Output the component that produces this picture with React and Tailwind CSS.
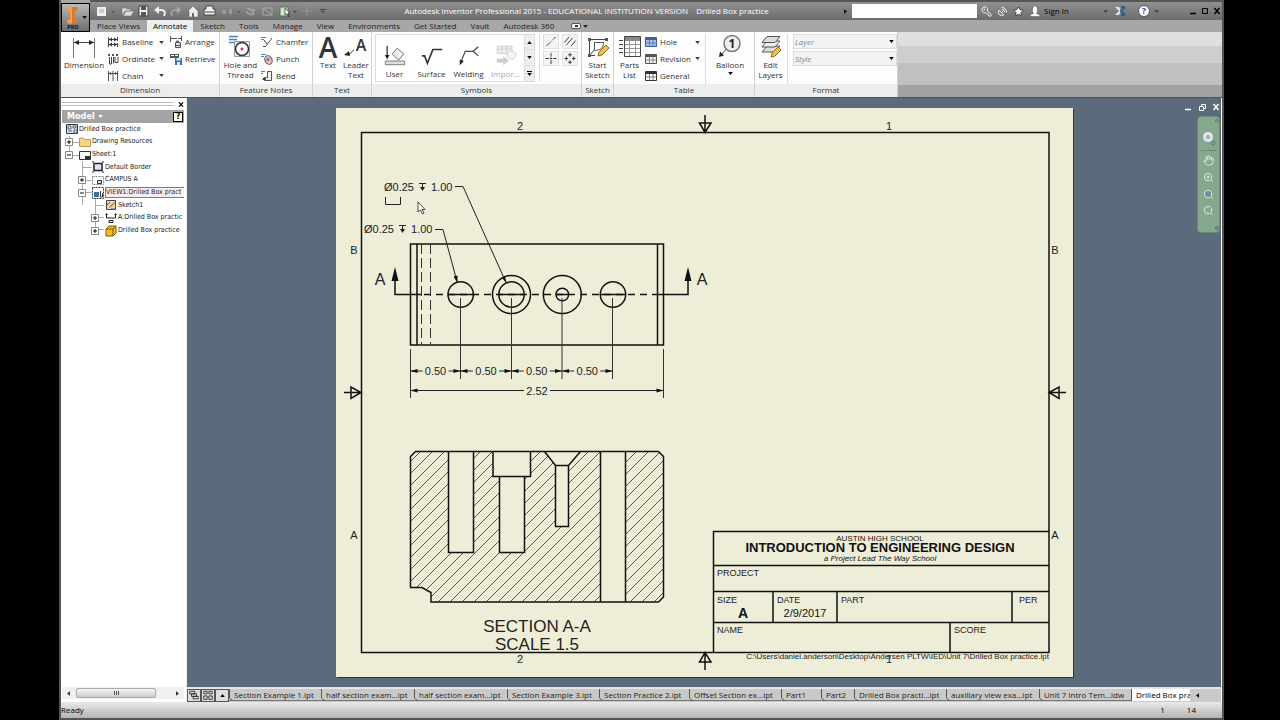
import React, { useState } from "react";
import { KeyRound, Star, Hand, Search, ZoomIn, SatelliteDish } from "lucide-react";

const ribbonTabs = [
  "Place Views",
  "Annotate",
  "Sketch",
  "Tools",
  "Manage",
  "View",
  "Environments",
  "Get Started",
  "Vault",
  "Autodesk 360",
];

const docTabs = [
  { name: "Section Example 1.ipt", w: "w-[92px]" },
  { name: "half section exam...ipt", w: "w-[93px]" },
  { name: "half section exam...ipt", w: "w-[93px]" },
  { name: "Section Example 3.ipt", w: "w-[92px]" },
  { name: "Section Practice 2.ipt", w: "w-[90px]" },
  { name: "Offset Section ex...ipt", w: "w-[92px]" },
  { name: "Part1", w: "w-[40px]" },
  { name: "Part2", w: "w-[33px]" },
  { name: "Drilled Box practi...ipt", w: "w-[92px]" },
  { name: "auxillary view exa...ipt", w: "w-[93px]" },
  { name: "Unit 7 Intro Tem...idw", w: "w-[92px]" },
];

const Caret = ({ className = "" }) => (
  <svg viewBox="0 0 6 4" className={`h-[3px] w-[5px] shrink-0 ${className}`}>
    <path d="M0 0h6L3 4z" fill="currentColor" />
  </svg>
);

/* ---------- ribbon icons ---------- */

const DimensionIcon = () => (
  <svg viewBox="0 0 26 26" className="h-[26px] w-[26px]" fill="none" stroke="#444">
    <path d="M2.500 4v20M23.500 4v20" stroke="#777" />
    <path d="M3 8.500h20" />
    <path d="M3 8.500l5-2.500v5zM23 8.500l-5-2.500v5z" fill="#222" stroke="none" />
  </svg>
);

const BaselineIcon = () => (
  <svg viewBox="0 0 12 12" className="h-[12px] w-[12px]" fill="none" stroke="#444">
    <path d="M1.500 1v10M10.500 1v4M10.500 7v4M1 3.500h9M1 8.500h9" />
    <path d="M2 3.500l3-2v4zM10 3.500l-3-2v4zM2 8.500l3-2v4zM10 8.500l-3-2v4z" fill="#333" stroke="none" />
  </svg>
);

const OrdinateIcon = () => (
  <svg viewBox="0 0 12 12" className="h-[12px] w-[12px]" fill="none" stroke="#444">
    <path d="M2.500 4v7h2v-7M6.500 4v6.500M8 4v5.500h3V4" />
    <path d="M1 1h2v2H1zM5 1h2v2H5zM9 1h2v2H9z" fill="#555" stroke="none" />
  </svg>
);

const ChainIcon = () => (
  <svg viewBox="0 0 12 12" className="h-[12px] w-[12px]" fill="none" stroke="#555">
    <path d="M1.500 1v10M6 1v10M10.500 1v10M1 3.500h10" />
    <path d="M2 3.500l2-1.500v3zM10 3.500l-2-1.500v3z" fill="#333" stroke="none" />
  </svg>
);

const ArrangeIcon = () => (
  <svg viewBox="0 0 12 12" className="h-[12px] w-[12px]" fill="none" stroke="#555">
    <path d="M.5 0v6M0 2.500h7M11.500 0v5M8 2.500h3" />
    <path d="M6.500 6v-1h2v1M5.500 6.500h5v5h-5z" fill="#ddd" />
    <path d="M6 9.500h4" />
  </svg>
);

const RetrieveIcon = () => (
  <svg viewBox="0 0 12 12" className="h-[12px] w-[12px]">
    <path d="M0 1h9v4H0z" fill="#555" />
    <path d="M1 2.500h3M5 2.500h3" stroke="#fff" />
    <path d="M5 5h7v7H5z" fill="#3c6fb0" />
    <path d="M6.500 5h4v2.500h-4zM7 9h3v3H7z" fill="#e8eef6" />
  </svg>
);

const HoleIcon = () => (
  <svg viewBox="0 0 26 26" className="h-[26px] w-[26px]" fill="none">
    <path d="M1 2.500h9M1 5.500h8M1 8.500h5" stroke="#3b8fae" strokeWidth="1.500" />
    <path d="M6.500 7.500h15v15h-15z" fill="#eee" stroke="#999" />
    <circle cx="14" cy="15" r="6.500" fill="#fff" stroke="#333" strokeWidth="1.500" />
    <circle cx="14" cy="15" r="1.500" fill="#d33" />
  </svg>
);

const ChamferIcon = () => (
  <svg viewBox="0 0 12 12" className="h-[12px] w-[12px]" fill="none">
    <path d="M0 1.500h5M0 3.500h3" stroke="#3b8fae" />
    <path d="M3 4l3 4M11 2L4.500 10.500H2" stroke="#444" />
  </svg>
);

const PunchIcon = () => (
  <svg viewBox="0 0 12 12" className="h-[12px] w-[12px]" fill="none">
    <path d="M0 1.500h5M0 3.500h3" stroke="#3b8fae" />
    <ellipse cx="7.500" cy="7" rx="3.500" ry="4.500" transform="rotate(-25 7.500 7)" fill="#ccc" stroke="#555" />
    <circle cx="7" cy="6.500" r="1.500" fill="#b55" />
  </svg>
);

const BendIcon = () => (
  <svg viewBox="0 0 12 12" className="h-[12px] w-[12px]" fill="none">
    <path d="M0 1.500h4M0 3.500h2" stroke="#3b8fae" />
    <path d="M6.500 1.500h4v9h-6v-3h2z" stroke="#555" fill="#eee" />
    <path d="M1 9l3-2v4z" fill="#333" />
  </svg>
);

const UserIcon = () => (
  <svg viewBox="0 0 26 26" className="h-[24px] w-[26px]" fill="none" stroke="#444">
    <path d="M4.500 3v12" strokeWidth="1.500" />
    <path d="M4.500 18l-2.500-5h5z" fill="#222" stroke="none" />
    <path d="M15.500 5.500l7 6.500-5.500 6.500-7-6.500z" fill="#eee" stroke="#666" />
    <path d="M2.500 19.500h21v4h-21z" fill="#ddd" stroke="#777" />
  </svg>
);

const SurfaceIcon = () => (
  <svg viewBox="0 0 26 26" className="h-[24px] w-[26px]" fill="none" stroke="#333">
    <path d="M2 14h3l3 8L14 7h10" strokeWidth="1.800" />
  </svg>
);

const WeldingIcon = () => (
  <svg viewBox="0 0 26 26" className="h-[24px] w-[26px]" fill="none" stroke="#444">
    <path d="M4 21L9 9h9M23 4l-5.500 5 5.500 5" strokeWidth="1.300" />
    <path d="M3 24l0-6 4.500 1.500z" fill="#222" stroke="none" />
  </svg>
);

const ImportIcon = () => (
  <svg viewBox="0 0 26 26" className="h-[24px] w-[26px]" fill="none" stroke="#ccc">
    <path d="M3.500 3.500h16v8h-16z" fill="#f1f1f1" />
    <path d="M4 6.500h15M8.500 3v8M13.500 3v8" />
    <circle cx="19" cy="13" r="4.500" fill="#f4f4f4" />
    <path d="M3 17h7v-3l6 5-6 5v-3H3z" fill="#ccc" stroke="none" />
  </svg>
);

const StartSketchIcon = () => (
  <svg viewBox="0 0 24 24" className="h-[24px] w-[24px]" fill="none" stroke="#444">
    <path d="M3.500 3v18M2 4.500h20M2 20.500h7M3 21l6-7" />
    <path d="M8.500 7.500v8M8.500 7.500h9c0 5-3 8-9 8" stroke="#555" />
    <path d="M2 3h3v3H2zM19 3h3v3h-3zM2 19h3v3H2z" fill="#555" stroke="none" />
    <path d="M12 21l1-4 7-7 3 3-7 7z" fill="#f0c24b" stroke="#8a6a1c" />
  </svg>
);

const PartsListIcon = () => (
  <svg viewBox="0 0 24 24" className="h-[24px] w-[24px]" fill="none" stroke="#777">
    <path d="M6.500 1.500h16v20h-16z" fill="#fff" stroke="#444" />
    <path d="M7 2h15v4H7z" fill="#888" stroke="none" />
    <path d="M7 9.500h15M7 13.500h15M7 17.500h15M11.500 3v18M17.500 3v18" stroke="#999" />
    <path d="M1 5.500h4M1 9.500h4M1 13.500h4M1 17.500h4" stroke="#444" />
  </svg>
);

const TableIcon = ({ fill, line }) => (
  <svg viewBox="0 0 12 12" className="h-[12px] w-[12px]" fill="none">
    <path d="M.5 1.500h11v9H.5z" fill={fill} stroke={line} />
    <path d="M1 2h10v2H1z" fill={line} />
    <path d="M1 7h10M4.500 3v7M8 3v7" stroke={line} strokeOpacity=".6" />
  </svg>
);

const BalloonIcon = () => (
  <svg viewBox="0 0 26 26" className="h-[26px] w-[26px]" fill="none">
    <circle cx="15" cy="9.500" r="8" fill="#eee" stroke="#777" strokeWidth="1.500" />
    <path d="M9.500 15L4 21" stroke="#444" />
    <path d="M2 23l1-5.500 4 4z" fill="#222" />
    <text x="15" y="14" fontSize="12" fontWeight="700" textAnchor="middle" fill="#222">
      1
    </text>
  </svg>
);

const EditLayersIcon = () => (
  <svg viewBox="0 0 24 24" className="h-[24px] w-[24px]" stroke="#555">
    <path d="M3 17l5-6h13l-5 6z" fill="#ddd" />
    <path d="M3 12l5-6h13l-5 6z" fill="#eee" />
    <path d="M3 7.500l5-6h13l-5 6z" fill="#ddd" />
    <path d="M12 22l1-4 6-6 3 3-6 6z" fill="#f0c24b" stroke="#8a6a1c" />
  </svg>
);

/* ---------- ribbon building blocks ---------- */

const Panel = ({ title, className, children }) => (
  <section className={`flex flex-col border-r border-[#d2d2d2] ${className}`}>
    <div className="flex h-[52px] bg-[#fdfdfd] pt-[2px]">{children}</div>
    <h2 className="h-[13px] bg-[#ededed] text-center leading-[12px]">{title}</h2>
  </section>
);

const BigButton = ({ icon, lines, className = "" }) => (
  <button className={`flex flex-col items-center ${className}`}>
    <span className="flex h-[26px] items-center">{icon}</span>
    {lines.map((l) => (
      <span key={l} className="block leading-[10px]">
        {l}
      </span>
    ))}
  </button>
);

const SmallButton = ({ icon, label, drop }) => (
  <button className="flex items-center text-left whitespace-nowrap">
    <span className="mr-[3px]">{icon}</span>
    <span className="flex-1">{label}</span>
    {drop && <Caret className="ml-[4px]" />}
  </button>
);

const Column = ({ className = "", children }) => (
  <div className={`grid h-[50px] grid-rows-3 ${className}`}>{children}</div>
);

const FormatSelect = ({ name }) => (
  <label className="relative flex h-[15px] items-center border border-[#ddd] bg-[#f3f3f3]">
    <select
      aria-label={name}
      className="w-full appearance-none bg-transparent pl-[1px] text-[8px] leading-[13px] text-[#888] italic outline-none"
    >
      <option>{name}</option>
    </select>
    <Caret className="absolute right-[2px] text-black" />
  </label>
);

const Ribbon = () => (
  <div className="flex h-[65px] bg-[linear-gradient(#dfdfdf_0_14px,#cecece_14px_31px,#c0c0c0_31px_53px,#a2a2a2_53px)] text-[8px] text-[#333]">
    <Panel title="Dimension" className="w-[159px]">
      <BigButton icon={<DimensionIcon />} lines={["Dimension"]} className="w-[46px]" />
      <Column className="w-[57px]">
        <SmallButton icon={<BaselineIcon />} label="Baseline" drop />
        <SmallButton icon={<OrdinateIcon />} label="Ordinate" drop />
        <SmallButton icon={<ChainIcon />} label="Chain" drop />
      </Column>
      <Column className="ml-[6px]">
        <SmallButton icon={<ArrangeIcon />} label="Arrange" />
        <SmallButton icon={<RetrieveIcon />} label="Retrieve" />
      </Column>
    </Panel>
    <Panel title="Feature Notes" className="w-[93px]">
      <BigButton icon={<HoleIcon />} lines={["Hole and", "Thread"]} className="w-[41px]" />
      <Column>
        <SmallButton icon={<ChamferIcon />} label="Chamfer" />
        <SmallButton icon={<PunchIcon />} label="Punch" />
        <SmallButton icon={<BendIcon />} label="Bend" />
      </Column>
    </Panel>
    <Panel title="Text" className="w-[59px]">
      <BigButton
        icon={<span className="text-[28px] leading-[26px] font-semibold text-[#333]">A</span>}
        lines={["Text"]}
        className="w-[30px]"
      />
      <BigButton
        icon={
          <svg viewBox="0 0 26 26" className="h-[26px] w-[26px]">
            <text x="18" y="17" fontSize="16" fontWeight="600" textAnchor="middle" fill="#333">
              A
            </text>
            <path d="M11 16c-2 0-2 4-6 4" fill="none" stroke="#333" />
            <path d="M1 21l5-4 1 5z" fill="#222" />
          </svg>
        }
        lines={["Leader", "Text"]}
        className="w-[26px]"
      />
    </Panel>
    <Panel title="Symbols" className="w-[210px]">
      <div className="ml-[3px] flex h-[48px] w-[160px] border border-[#ddd] bg-white">
        {[
          ["User", <UserIcon />],
          ["Surface", <SurfaceIcon />],
          ["Welding", <WeldingIcon />],
        ].map(([label, icon]) => (
          <button key={label} className="flex w-[37px] flex-col items-center pt-[8px]">
            {icon}
            <span className="leading-[14px]">{label}</span>
          </button>
        ))}
        <button className="flex w-[37px] flex-col items-center pt-[8px] text-[#aaa]">
          <ImportIcon />
          <span className="leading-[14px]">Impor...</span>
        </button>
        <div className="ml-auto grid w-[10px] grid-rows-3 border-l border-[#ddd] bg-[#eee] text-black">
          <button aria-label="Scroll up" className="flex items-center justify-center border-b border-[#ddd]">
            <Caret className="rotate-180" />
          </button>
          <button aria-label="Scroll down" className="flex items-center justify-center border-b border-[#ddd]">
            <Caret />
          </button>
          <button aria-label="More symbols" className="flex flex-col items-center justify-center gap-px">
            <span className="h-px w-[5px] bg-black" />
            <Caret />
          </button>
        </div>
      </div>
      <div className="ml-[4px] grid h-[48px] grid-cols-2 content-start gap-x-[3px] gap-y-[2px] border-l border-[#ddd] pl-[3px]">
        {[
          ["Center Line", "M2 12L6 8M7 7l1-1M9 5l3-3"],
          ["Center Line Bisector", "M1 8l5-6M3 11l7-8M8 12l5-6"],
          ["Center Mark", "M7 1v4M7 9v4M7 6v2M1 7h4M9 7h4M6 7h2"],
          ["Centered Pattern", "M7 1v4M5 3h4M7 9v4M5 11h4M1 7h4M3 5v4M9 7h4M11 5v4"],
        ].map(([label, d]) => (
          <button key={label} aria-label={label} className="h-[15px] w-[16px] border border-[#e0e0e0] bg-[#f4f4f4]">
            <svg viewBox="0 0 14 14" className="h-[13px] w-[14px]" fill="none" stroke="#333">
              <path d={d} />
            </svg>
          </button>
        ))}
      </div>
    </Panel>
    <Panel title="Sketch" className="w-[32px]">
      <BigButton icon={<StartSketchIcon />} lines={["Start", "Sketch"]} className="w-[31px]" />
    </Panel>
    <Panel title="Table" className="w-[141px]">
      <BigButton icon={<PartsListIcon />} lines={["Parts", "List"]} className="w-[31px]" />
      <Column className="w-[55px]">
        <SmallButton icon={<TableIcon fill="#a9bfe0" line="#3f5f96" />} label="Hole" drop />
        <SmallButton icon={<TableIcon fill="#eee" line="#555" />} label="Revision" drop />
        <SmallButton icon={<TableIcon fill="#fff" line="#333" />} label="General" />
      </Column>
      <div className="ml-[5px] flex flex-1 justify-center border-l border-[#ddd]">
        <button className="flex flex-col items-center">
          <BalloonIcon />
          <span className="leading-[10px]">Balloon</span>
          <Caret className="mt-[2px] text-black" />
        </button>
      </div>
    </Panel>
    <Panel title="Format" className="w-[143px]">
      <BigButton icon={<EditLayersIcon />} lines={["Edit", "Layers"]} className="w-[31px]" />
      <div className="ml-px grid flex-1 content-start gap-[2px] border-l border-[#ddd] pl-[5px]">
        <FormatSelect name="Layer" />
        <FormatSelect name="Style" />
      </div>
    </Panel>
  </div>
);

/* ---------- title bar ---------- */

const QuickAccess = () => (
  <svg viewBox="0 0 240 16" className="h-[16px] w-[240px] shrink-0" fill="none" stroke="#eee">
    <path d="M7 4h9v9H7z" fill="#eee" stroke="none" />
    <path d="M9 7h5M9 9h5" stroke="#aaa" />
    <path d="M21 8h4l-2 2z" fill="#555" stroke="none" />
    <path d="M32 5h4l1 1h4v2h-6l-3 5zM33 13l3-5h8l-3 5z" fill="#ddd" stroke="#666" strokeWidth=".5" />
    <path d="M49 3h9v10h-9z" fill="#eee" stroke="#444" />
    <path d="M51 3h5v4h-5zM51 9h5v4h-5z" fill="#555" stroke="none" />
    <path d="M66 7h5c5 0 4 4 3 6" strokeWidth="2" />
    <path d="M69 3l-5 4 5 4z" fill="#eee" stroke="none" />
    <path d="M89 7h-4c-4 0-4 3-3 6" stroke="#aaa" strokeWidth="1.500" />
    <path d="M87 3l4 4-4 4z" fill="#aaa" stroke="none" />
    <path d="M98 8l5-5 5 5v6h-9V8z" fill="#eee" stroke="#555" strokeWidth=".5" />
    <path d="M102 10h2v4h-2z" fill="#666" stroke="none" />
    <path d="M116 3h7v3h2v6h-11V6h2z" fill="#f2f2f2" stroke="#444" />
    <path d="M115 9h9" stroke="#444" />
    <path d="M132 7h4v4h-4zM139 6h3v5h-3z" fill="#999" stroke="none" />
    <path d="M147 8h3l-1 2z" fill="#555" stroke="none" />
    <path d="M157 5l5 2 2 5M156 9l6 3M163 6l2 2" stroke="#aaa" strokeWidth="1.500" />
    <path d="M173 5h9v7h-9zM174 6l8 6" stroke="#aaa" />
    <path d="M190 4h8v9h-8z" fill="#cfe6c8" stroke="#3c8a3c" />
    <path d="M195 5l5 5h-2l1 4-2-3-2 1z" fill="#fff" stroke="#222" strokeWidth=".7" />
    <path d="M203 8h4l-2 2z" fill="#444" stroke="none" />
    <path d="M217 3v10M212 8h10" stroke="#999" />
    <path d="M230 6h6v1h-6zM231 8h4l-2 2z" fill="#444" stroke="none" />
  </svg>
);

const WindowButtons = ({ className, restore }) => (
  <div className={`flex items-center ${className}`}>
    <button aria-label="Minimize">
      <svg viewBox="0 0 8 8" className="h-[8px] w-[8px]" stroke="currentColor" strokeWidth="1.500">
        <path d="M1 6.500h6" />
      </svg>
    </button>
    <button aria-label="Restore">
      <svg viewBox="0 0 8 8" className="h-[8px] w-[8px]" stroke="currentColor" fill="none">
        {restore ? <path d="M1.500 3.500h4v4h-4zM3.500 3V1.500h4v4H6" /> : <path d="M1.500 1.500h5v5h-5z" />}
      </svg>
    </button>
    <button aria-label="Close">
      <svg viewBox="0 0 8 8" className="h-[8px] w-[8px]" stroke="currentColor" strokeWidth="1.500">
        <path d="M1.500 1l5 6M6.500 1l-5 6" />
      </svg>
    </button>
  </div>
);

const TitleBar = () => (
  <div className="flex h-[20px] items-center border-t-2 border-[#555] bg-linear-to-b from-[#909090] to-[#6c6c6c] text-[8px]">
    <QuickAccess />
    <h1 className="ml-auto whitespace-pre text-white">
      Autodesk Inventor Professional 2015 - EDUCATIONAL INSTITUTION VERSION{"    "}Drilled Box practice
    </h1>
    <span className="mr-[4px] ml-auto text-black">
      <Caret className="-rotate-90" />
    </span>
    <input aria-label="Search help" className="h-[14px] w-[125px] bg-white px-1 outline-none" />
    <div className="flex items-center gap-[5px] pl-[4px] text-white">
      <button aria-label="Search">
        <KeyRound className="size-[11px] -scale-x-100" />
      </button>
      <button aria-label="Communication Center">
        <SatelliteDish className="size-[11px]" />
      </button>
      <button aria-label="Favorites">
        <Star className="size-[11px]" fill="#fff" stroke="#333" />
      </button>
      <button className="flex items-center gap-[3px] text-black">
        <svg viewBox="0 0 12 12" className="h-[12px] w-[12px]" fill="#fff" stroke="#555" strokeWidth=".5">
          <path d="M1 11.500c0-2 2-2.500 3.500-3C3 7 3 1 6 1s3 6 1.500 7.500c1.500.5 3.500 1 3.500 3z" />
        </svg>
        Sign In
      </button>
    </div>
    <Caret className="ml-[34px] text-[#444]" />
    <svg viewBox="0 0 12 10" className="ml-[6px] h-[10px] w-[12px]" fill="none" strokeWidth="2">
      <path d="M1 1l4 4-4 4h4l2-4-2-4z" fill="#dfe8f5" stroke="none" />
      <path d="M11 1L7 5l4 4M7 1h4M7 9h4" stroke="#2f5aa0" />
    </svg>
    <button aria-label="Help" className="ml-[12px]">
      <svg viewBox="0 0 12 12" className="h-[12px] w-[12px]">
        <circle cx="6" cy="6" r="5.500" fill="#fff" stroke="#456" />
        <text x="6" y="9" fontSize="9" fontWeight="700" textAnchor="middle" fill="#2a5298">
          ?
        </text>
      </svg>
    </button>
    <Caret className="ml-[4px] text-[#444]" />
    <WindowButtons className="ml-[30px] gap-[4px] pr-px text-black" />
  </div>
);

const Header = () => {
  const [active, setActive] = useState("Annotate");
  return (
    <header className="border-b border-[#4a5562]">
      <div className="flex bg-[#a7a7a7]">
        <button
          aria-label="Application menu"
          className="mt-[3px] flex h-[29px] w-[29px] shrink-0 items-center justify-between border border-black bg-linear-to-b from-[#bbb] to-[#6e6e6e] pr-[2px]"
        >
          <svg viewBox="0 0 22 27" className="h-[27px] w-[22px]">
            <path d="M6 2h11v4h-3v10h3v4H6v-4h3V6H6z" fill="#e0782a" />
            <path d="M6 2h5v18H6v-4h3V6H6z" fill="#f6a352" />
            <text x="12" y="26" fontSize="6" fontWeight="700" textAnchor="middle" fill="#111">
              PRO
            </text>
          </svg>
          <Caret />
        </button>
        <div className="min-w-0 flex-1">
          <TitleBar />
          <nav className="flex h-[12px] items-center text-[8px] text-[#222]">
            {ribbonTabs.map((t) => (
              <button
                key={t}
                onClick={() => setActive(t)}
                className={
                  t === active
                    ? "h-[12px] bg-[#efefef] px-[6px] leading-[12px] text-black"
                    : "h-[12px] px-[7px] leading-[12px]"
                }
              >
                {t}
              </button>
            ))}
            <button aria-label="Ribbon options" className="ml-[10px] flex items-center gap-[2px]">
              <span className="flex h-[6px] w-[10px] items-center justify-center rounded-xs border border-[#555] bg-white">
                <span className="h-[2px] w-[3px] bg-[#333]" />
              </span>
              <Caret />
            </button>
          </nav>
        </div>
      </div>
      <Ribbon />
    </header>
  );
};

/* ---------- model browser ---------- */

const SheetGlyph = () => (
  <svg viewBox="0 0 12 12" className="h-[12px] w-[12px]">
    <path d="M.5 2.500h11v8H.5z" fill="#fff" stroke="#333" />
    <path d="M6 7h5v3H6z" fill="#333" />
  </svg>
);

const tree = [
  {
    label: "Drilled Box practice",
    pad: "pl-[4px]",
    icon: (
      <svg viewBox="0 0 12 12" className="h-[12px] w-[12px]" fill="none">
        <path d="M.5 1.500h11v9H.5z" fill="#dce6ee" stroke="#333" />
        <path d="M2 3h3v3H2zM7 3h3v2H7zM2 8h4M8 7h3v3H8z" stroke="#4d6f8a" />
      </svg>
    ),
  },
  {
    label: "Drawing Resources",
    pad: "pl-[3px]",
    box: "+",
    icon: (
      <svg viewBox="0 0 12 12" className="h-[12px] w-[12px]">
        <path d="M.5 2h4l1 1.500h6v7H.5z" fill="#f3d58c" stroke="#c59a45" />
      </svg>
    ),
  },
  { label: "Sheet:1", pad: "pl-[3px]", box: "-", icon: <SheetGlyph /> },
  {
    label: "Default Border",
    pad: "pl-[30px]",
    icon: (
      <svg viewBox="0 0 12 12" className="h-[12px] w-[12px]">
        <path d="M2 2.500h8v7H2z" fill="#dfe6f2" stroke="#223" strokeWidth="1.500" />
        <path d="M0 1h2M10 1h2M0 11h2M10 11h2" stroke="#223" />
      </svg>
    ),
  },
  {
    label: "CAMPUS A",
    pad: "pl-[16px]",
    box: "+",
    icon: (
      <svg viewBox="0 0 12 12" className="h-[12px] w-[12px]" fill="none">
        <path d="M.5 2.500h11v8H.5z" stroke="#888" strokeDasharray="2 1" />
        <path d="M5.500 6.500h4v3h-4z" fill="#ddd" stroke="#333" />
      </svg>
    ),
  },
  {
    label: "VIEW1:Drilled Box pract",
    pad: "pl-[16px]",
    box: "-",
    selected: true,
    icon: (
      <svg viewBox="0 0 12 12" className="h-[12px] w-[12px]" fill="none">
        <path d="M.5 .5h11v11H.5z" stroke="#333" strokeDasharray="2 1" />
        <path d="M2 5h5v5H2z" fill="#3f6f9f" />
        <path d="M8.500 4v6h2V6" stroke="#333" />
      </svg>
    ),
  },
  {
    label: "Sketch1",
    pad: "pl-[43px]",
    icon: (
      <svg viewBox="0 0 12 12" className="h-[12px] w-[12px]" fill="none">
        <path d="M1.500 1.500h9v9h-9z" fill="#e6d9b8" stroke="#444" />
        <path d="M4 8l5-5 1 1-5 5z" fill="#d0782a" />
        <path d="M2 6l3-3M6 10h4" stroke="#3a5f9a" />
      </svg>
    ),
  },
  {
    label: "A:Drilled Box practic",
    pad: "pl-[29px]",
    box: "+",
    icon: (
      <svg viewBox="0 0 12 12" className="h-[12px] w-[12px]" fill="none" stroke="#222">
        <path d="M1.500 2v4h9V2M4 8.500h4v2H4z" />
        <path d="M0 3l1.500-2L3 3zM9 3l1.500-2L12 3z" fill="#222" stroke="none" />
      </svg>
    ),
  },
  {
    label: "Drilled Box practice",
    pad: "pl-[29px]",
    box: "+",
    icon: (
      <svg viewBox="0 0 12 12" className="h-[12px] w-[12px]" stroke="#7a5600">
        <path d="M1 4l3-3h7v7l-3 3H1z" fill="#f2bf2f" />
        <path d="M1 4h7v7M8 4l3-3" fill="none" />
      </svg>
    ),
  },
];

const Expander = ({ sign }) => (
  <svg viewBox="0 0 8 8" className="mr-[6px] h-[8px] w-[8px] shrink-0" fill="#fff">
    <path d="M.5 .5h7v7h-7z" stroke="#888" />
    <path d={sign === "+" ? "M2 4h4M4 2v4" : "M2 4h4"} stroke="#111" />
  </svg>
);

const ModelBrowser = () => (
  <aside className="flex w-[126px] shrink-0 flex-col border-r border-[#eee] bg-white pr-[2px] pl-px font-['DejaVu_Sans_Condensed','DejaVu_Sans',sans-serif] text-[7px] text-[#222]">
    <div className="flex h-[12px] items-center gap-[4px]">
      <span className="h-[4px] flex-1 border-y border-[#bbb]" />
      <button aria-label="Close browser" className="text-black">
        <svg viewBox="0 0 6 6" className="h-[5px] w-[6px]" stroke="currentColor" strokeWidth="1.500">
          <path d="M.5 .5l5 5M5.500 .5l-5 5" />
        </svg>
      </button>
    </div>
    <div className="flex h-[13px] items-center bg-[#a3a3a3] px-[5px] text-white">
      <button className="flex items-center gap-[3px] text-[9px] font-bold">
        Model
        <Caret />
      </button>
      <button
        aria-label="Help"
        className="-mr-[4px] ml-auto flex h-[10px] w-[10px] items-center justify-center border border-black bg-[#ffffdd] text-[8px] font-bold text-black"
      >
        ?
      </button>
    </div>
    <div className="relative">
      <svg viewBox="0 0 122 113" className="absolute top-0 left-0 h-[113px] w-[122px]" fill="none" stroke="#aaa">
        <path d="M7.500 13v19.500H17M7.500 19.500H17M20.500 38v44M20.500 44.500h9M20.500 57.500h9M20.500 69.500h9M33.500 75v31.500H42M33.500 82.500h9M33.500 94.500H42" />
      </svg>
      <ul className="relative grid h-[114px] grid-rows-9">
        {tree.map((n, i) => (
          <li key={i} className={`flex items-center whitespace-nowrap ${n.pad}`}>
            {n.box && <Expander sign={n.box} />}
            <span className="mr-px shrink-0">{n.icon}</span>
            <a
              href="#"
              className={
                n.selected
                  ? "h-[11px] flex-1 border border-r-0 border-[#b8606a] bg-[#f6eef0] leading-[9px]"
                  : "leading-[11px]"
              }
            >
              {n.label}
            </a>
          </li>
        ))}
      </ul>
    </div>
    <div className="mt-auto mb-[3px] flex h-[12px] items-center bg-[#f0f0f0] px-[4px] text-[#333]">
      <Caret className="rotate-90" />
      <div className="ml-[5px] flex h-[10px] w-[80px] items-center justify-center gap-px rounded-xs border border-[#aaa] bg-linear-to-b from-[#f4f4f4] to-[#ccc]">
        <span className="h-[4px] w-px bg-[#555]" />
        <span className="h-[4px] w-px bg-[#555]" />
        <span className="h-[4px] w-px bg-[#555]" />
      </div>
      <Caret className="ml-auto -rotate-90" />
    </div>
  </aside>
);

/* ---------- drawing sheet ---------- */

// horizontal dimension with arrows at both ends and the value in a gap
const LinearDim = ({ x1, x2, y, value, gap = 13 }) => {
  const mid = (x1 + x2) / 2;
  return (
    <g stroke="#222">
      <path d={`M${x1} ${y}H${mid - gap}M${mid + gap} ${y}H${x2}`} />
      <path
        d={`M${x1} ${y}l7 -2v4zM${x2} ${y}l-7 -2v4z`}
        fill="#111"
        stroke="none"
      />
      <text x={mid} y={y + 4} fontSize="11" textAnchor="middle" fill="#222" stroke="none">
        {value}
      </text>
    </g>
  );
};

// hole callout: diameter, depth symbol, depth
const HoleNote = ({ x, y }) => (
  <g>
    <text x={x} y={y + 4} fontSize="11">
      Ø0.25
    </text>
    <path d={`M${x + 35} ${y - 3.5}h7M${x + 38.5} ${y - 3}v6`} stroke="#222" fill="none" />
    <path d={`M${x + 36} ${y}h5l-2.5 4z`} fill="#222" />
    <text x={x + 47} y={y + 4} fontSize="11">
      1.00
    </text>
  </g>
);

const hatch = Array.from({ length: 34 }, (_, i) => 422 + i * 12);

const Sheet = () => (
  <svg
    viewBox="336 108 737 569"
    className="w-full max-w-[737px] self-start bg-[#eeedd8] font-['Liberation_Sans',Arial,sans-serif] shadow-[1px_1px_0_#333]"
    fill="#222"
  >
    {/* border and zone marks */}
    <g fontSize="11" textAnchor="middle">
      <text x="520" y="130">2</text>
      <text x="889" y="130">1</text>
      <text x="520" y="663">2</text>
      <text x="354" y="254">B</text>
      <text x="1055" y="254">B</text>
      <text x="354" y="539">A</text>
      <text x="1055" y="539">A</text>
      <text x="889" y="663">1</text>
    </g>
    <text x="1049" y="659" fontSize="8" textAnchor="end">
      C:\Users\daniel.anderson\Desktop\Andersen PLTW\IED\Unit 7\Drilled Box practice.ipt
    </text>
    <g fill="none" stroke="#111" strokeWidth="1.500">
      <path d="M361.500 132.500H1049V652.500H361.500z" />
      <path d="M705 115v17M699.500 123h11.500l-6 9.500z" />
      <path d="M705 670v-17M699.500 662h11.500l-6-9.500z" />
      <path d="M344 392.500h17M351 387v11.500l10-6z" />
      <path d="M1066 392.500h-17M1059 387v11.500l-10-6z" />
    </g>

    {/* top view */}
    <g fill="none" stroke="#111" strokeWidth="1.500">
      <path d="M410.500 244H663.500V345H410.500zM417 244v101M657.500 244v101" />
      <path d="M421.500 244v101M430.500 244v101" stroke="#333" strokeWidth="1" strokeDasharray="10 4" />
      <circle cx="460.700" cy="294.500" r="12.700" />
      <circle cx="511.500" cy="294.500" r="19" />
      <circle cx="511.500" cy="294.500" r="12.700" />
      <circle cx="562.300" cy="294.500" r="19" />
      <circle cx="562.300" cy="294.500" r="6.300" />
      <circle cx="613" cy="294.500" r="12.700" />
      <path d="M395 276v18.500H421M657 294.500h31V276M448 294.500h25M499 294.500h25M556 294.500h13M600 294.500h25" />
      <path d="M424 294.500H657" strokeDasharray="7 5" />
    </g>
    <path d="M395 267l3.500 14h-7zM688 267l3.500 14h-7z" fill="#111" />
    <text x="380" y="285" fontSize="16" textAnchor="middle">A</text>
    <text x="702" y="285" fontSize="16" textAnchor="middle">A</text>

    {/* dimensions */}
    <path
      d="M410.500 349v49M663.500 349v49M460.500 298v81M511.500 298v81M562 298v81M612.500 298v81"
      fill="none"
      stroke="#333"
    />
    <LinearDim x1={410.5} x2={460.5} y={371} value="0.50" />
    <LinearDim x1={460.5} x2={511.5} y={371} value="0.50" />
    <LinearDim x1={511.5} x2={562} y={371} value="0.50" />
    <LinearDim x1={562} x2={612.5} y={371} value="0.50" />
    <LinearDim x1={410.5} x2={663.5} y={390.5} value="2.52" />

    {/* hole notes */}
    <HoleNote x={384} y={187} />
    <HoleNote x={364} y={229} />
    <g fill="none" stroke="#222">
      <path d="M455 186.500h8l43 96M435 229.500h8l14 52" />
      <path d="M385.500 197v7.500h15V197" />
    </g>
    <path d="M506.500 283l-5-5.500 3.500-1.500zM457.500 283l-4-6.500 4-1z" fill="#111" />

    {/* section view */}
    <clipPath id="cut">
      <path
        clipRule="evenodd"
        d="M415.500 451.500H658.500L663.500 456.500V597L658.500 602H431V592.500L422 587.500H410.500V456.500zM448.500 451.500V552.500H473.500V451.500zM493 451.500V476.500H499.500V552.500H524.500V476.500H530.500V451.500zM544.500 451.500L555.500 465.500V526.500H568.500V465.500L580.500 451.500zM600.500 451.500V602H625.500V451.500z"
      />
    </clipPath>
    <g clipPath="url(#cut)" stroke="#555" strokeWidth="1">
      {hatch.map((x) => (
        <path key={x} d={`M${x} 450L${x - 154} 604`} />
      ))}
    </g>
    <g fill="none" stroke="#111" strokeWidth="1.500">
      <path d="M415.500 451.500H658.500L663.500 456.500V597L658.500 602H431V592.500L422 587.500H410.500V456.500z" />
      <path d="M448.500 451.500V552.500H473.500V451.500" />
      <path d="M493 451.500V476.500H530.500V451.500M499.500 476.500V552.500H524.500V476.500" />
      <path d="M544.500 451.500L555.500 465.500H568.500L580.500 451.500M555.500 465.500V526.500H568.500V465.500" />
      <path d="M600.500 451.500V602M625.500 451.500V602" />
    </g>
    <g fontSize="17" textAnchor="middle">
      <text x="537" y="632">SECTION A-A</text>
      <text x="537" y="650">SCALE 1.5</text>
    </g>

    {/* title block */}
    <path
      d="M713.500 652V531.500H1049M713.500 565.500H1049M713.500 591.500H1049M713.500 622.500H1049M773 591.500V622M837 591.500V622M1012 591.500V622M950 622V652"
      fill="none"
      stroke="#111"
      strokeWidth="1.500"
    />
    <g textAnchor="middle" fill="#111">
      <text x="880" y="541" fontSize="8">AUSTIN HIGH SCHOOL</text>
      <text x="880" y="552" fontSize="13" fontWeight="700">INTRODUCTION TO ENGINEERING DESIGN</text>
      <text x="880" y="561" fontSize="8" fontStyle="italic">a Project Lead The Way School</text>
      <text x="743" y="618" fontSize="14" fontWeight="700">A</text>
      <text x="805" y="617" fontSize="11">2/9/2017</text>
    </g>
    <g fontSize="9">
      <text x="717" y="576">PROJECT</text>
      <text x="717" y="603">SIZE</text>
      <text x="777" y="603">DATE</text>
      <text x="841" y="603">PART</text>
      <text x="1019" y="603">PER</text>
      <text x="717" y="633">NAME</text>
      <text x="954" y="633">SCORE</text>
    </g>

    {/* pointer */}
    <path d="M418 202v10l2.500-2 2 4 1.500-1-2-3.500h3z" fill="#fff" stroke="#222" strokeWidth=".8" />
  </svg>
);

const NavBar = () => (
  <div className="absolute top-[18px] right-px flex h-[117px] w-[23px] flex-col items-center rounded-sm border border-[#6b8a78] bg-[#84a98c] py-[2px] text-[#e3ebe3]">
    <span className="mb-[7px] h-[4px] w-[4px] self-end rounded-full border border-[#5f8070]" />
    <button aria-label="Full Navigation Wheel">
      <svg viewBox="0 0 16 16" className="h-[16px] w-[16px]" fill="none">
        <circle cx="7" cy="7" r="6" fill="#cfdcd4" stroke="#7390a0" />
        <circle cx="7" cy="7" r="3" fill="#9fb8b0" stroke="#fff" />
        <circle cx="12" cy="13" r="2" fill="#84a98c" stroke="#5b7885" />
      </svg>
    </button>
    <span className="my-[4px] h-px w-[16px] bg-[#6b8a78]" />
    <button aria-label="Pan" className="mb-[6px]">
      <Hand className="size-[11px]" />
    </button>
    <button aria-label="Zoom" className="mb-[6px]">
      <ZoomIn className="size-[11px]" />
    </button>
    <button aria-label="Zoom Window" className="mb-[5px]">
      <Search className="size-[11px]" fill="#6f8fa0" />
    </button>
    <button aria-label="Zoom All">
      <Search className="size-[11px]" />
    </button>
    <span className="mt-auto h-[4px] w-[4px] self-end rounded-full border border-[#4f7080]" />
  </div>
);

const DocumentTabs = () => (
  <div className="flex h-[15px] items-start overflow-hidden border-t-2 border-[#e6e6e6] bg-[#c9c9c9] text-[8px] text-[#222]">
    {[
      ["Cascade", "M1.500 1.500h6v3h-6zM3.500 4.500h6v3h-6zM5.500 7.500h6v3h-6z"],
      ["Tile", "M1.500 1.500h4v3h-4zM7.500 1.500h4v3h-4zM1.500 7h4v4h-4zM7.500 7h4v4h-4z"],
    ].map(([label, d]) => (
      <button key={label} aria-label={label} className="h-[13px] w-[14px] shrink-0 border border-[#555] bg-[#ddd]">
        <svg viewBox="0 0 13 13" className="h-[11px] w-[12px]" fill="none" stroke="#222">
          <path d={d} />
        </svg>
      </button>
    ))}
    <button
      aria-label="Open documents"
      className="flex h-[13px] w-[14px] shrink-0 items-center justify-center border border-[#555] bg-[#ddd] text-black"
    >
      <Caret className="rotate-180" />
    </button>
    {docTabs.map((t, i) => (
      <button
        key={i}
        className={`flex h-[12px] shrink-0 items-center border-b border-[#777] whitespace-nowrap ${t.w}`}
      >
        <svg viewBox="0 0 5 12" className="h-[12px] w-[5px]" fill="none" stroke="#555">
          <path d="M.5 0v9l3.500 3" />
        </svg>
        {t.name}
      </button>
    ))}
    <button className="h-[12px] w-[59px] shrink-0 overflow-hidden border-l border-[#555] bg-white pl-[4px] text-left leading-[12px] whitespace-nowrap text-black">
      Drilled Box pra
    </button>
    <button aria-label="Scroll tabs" className="ml-[5px] flex h-[12px] items-center text-black">
      <Caret className="rotate-90" />
    </button>
  </div>
);

const App = () => {
  return (
    <div className="flex min-h-screen flex-col bg-black pr-[56px] pl-[59px] font-['Open_Sans','Noto_Sans',sans-serif]">
      <div className="flex flex-1 flex-col border-x-2 border-[#555]">
        <Header />
        <main className="flex flex-1">
          <ModelBrowser />
          <div className="flex min-w-0 flex-1 flex-col border-r border-white">
            <div className="relative flex flex-1 justify-center bg-[#5b6b7c] pt-[10px] pb-[8px]">
              <Sheet />
              <WindowButtons restore className="absolute top-[5px] right-px gap-[6px] text-white" />
              <NavBar />
            </div>
            <DocumentTabs />
          </div>
        </main>
        <footer className="flex h-[18px] items-center border-b-2 border-[#555] bg-linear-to-b from-[#e9e9e9] to-[#b5b5b5] text-[8px] text-black">
          <span>Ready</span>
          <span className="mr-[22px] ml-auto">1</span>
          <span className="mr-[26px]">14</span>
        </footer>
      </div>
    </div>
  );
};

export default App;
